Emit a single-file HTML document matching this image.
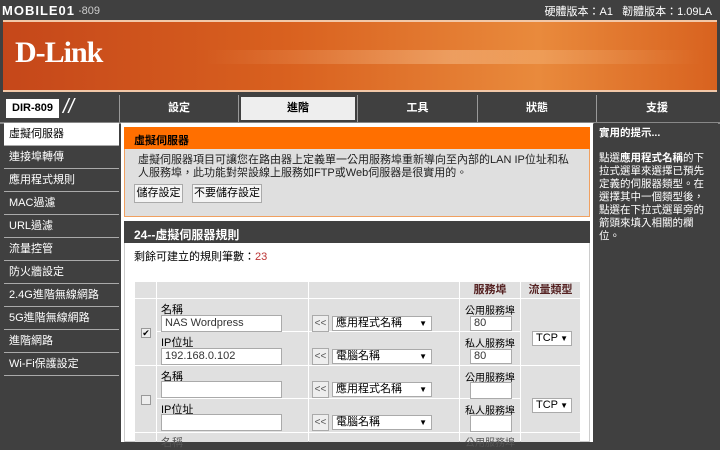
<!DOCTYPE html>
<html><head><meta charset="utf-8"><style>
*{margin:0;padding:0;box-sizing:border-box}
body{width:720px;height:442px;overflow:hidden;background:#404040;font-family:"Liberation Sans","Noto Sans CJK TC",sans-serif;font-size:11px;color:#000;position:relative}
.a{position:absolute}
.top{left:0;top:0;width:720px;height:19px;background:#404040;color:#fff;font-size:11px}
.banner{left:3px;top:20px;width:714px;height:72px;background:linear-gradient(90deg,#c5471a 0%,#d9611f 40%,#e98a3c 75%,#d8621f 100%);border-top:2px solid #f2c8a8;border-bottom:2px solid #f2c8a8}
.stripe{left:200px;top:28px;width:500px;height:14px;background:linear-gradient(90deg,rgba(255,255,255,0),rgba(255,220,180,.35),rgba(255,255,255,0))}
.nav{top:95px;height:27px;background:#404040;color:#fff;font-weight:bold;text-align:center;line-height:27px;font-size:11px;border-left:1px solid #999}
.menu{left:4px;width:115px;height:23px;background:#404040;color:#fff;border-bottom:1px solid #aaa;line-height:22px;padding-left:5px;font-size:11px}
.sel{position:absolute;height:15px;border:1px solid #aaa;background:#fff;font-size:11px;line-height:13px;padding-left:3px}
.btnl{position:absolute;width:17px;height:17px;border:1px solid #aaa;background:#eee;font-size:10px;line-height:15px;text-align:center;color:#555}
.lbl{position:absolute;font-size:11px}
.pl{position:absolute;font-size:10px;width:60px;text-align:center;left:460px}
.cell{position:absolute;background:#e0e0e0}
</style></head><body>
<div class="a top"><span class="a" style="left:4px;top:2px;color:#ccc">產品頁面：DIR-809</span><span class="a" style="left:2px;top:3px;font-weight:bold;font-size:13px;color:#fff;letter-spacing:1px;background:#404040;padding-right:4px">MOBILE01</span><span class="a" style="right:8px;top:3px">硬體版本：A1 &nbsp; 韌體版本：1.09LA</span></div>
<div class="a banner"><div class="a stripe"></div><span class="a" style="left:12px;top:14px;font-family:'Liberation Serif',serif;font-weight:bold;font-size:30px;color:#fff;letter-spacing:-1px">D-Link</span></div>
<div class="a" style="left:3px;top:95px;width:116px;height:27px;background:#404040"><div class="a" style="left:3px;top:4px;width:53px;height:19px;background:#fff;color:#000;font-weight:bold;font-size:11px;line-height:19px;text-align:center">DIR-809</div><span class="a" style="left:60px;top:1px;color:#fff;font-size:20px;font-style:italic">//</span></div>
<div class="a nav" style="left:119px;width:119px">設定</div>
<div class="a nav" style="left:238px;width:119px;"><div style="margin:2px;background:#eee;color:#000;line-height:23px">進階</div></div>
<div class="a nav" style="left:357px;width:120px">工具</div>
<div class="a nav" style="left:477px;width:119px">狀態</div>
<div class="a nav" style="left:596px;width:121px">支援</div>
<div class="a" style="left:0;top:122px;width:720px;height:2px;background:#888"></div>
<div class="a menu" style="top:123px;background:#fff;color:#000">虛擬伺服器</div>
<div class="a menu" style="top:146px">連接埠轉傳</div>
<div class="a menu" style="top:169px">應用程式規則</div>
<div class="a menu" style="top:192px">MAC過濾</div>
<div class="a menu" style="top:215px">URL過濾</div>
<div class="a menu" style="top:238px">流量控管</div>
<div class="a menu" style="top:261px">防火牆設定</div>
<div class="a menu" style="top:284px">2.4G進階無線網路</div>
<div class="a menu" style="top:307px">5G進階無線網路</div>
<div class="a menu" style="top:330px">進階網路</div>
<div class="a menu" style="top:353px">Wi-Fi保護設定</div>
<div class="a" style="left:121px;top:123px;width:472px;height:319px;background:#fff"></div>
<div class="a" style="left:124px;top:127px;width:466px;height:90px;background:#dfdfdf;border:1px solid #f0a060"></div>
<div class="a" style="left:124px;top:127px;width:466px;height:22px;background:#ff6f00;color:#000;font-weight:bold;padding:5px 0 0 10px">虛擬伺服器</div>
<div class="a" style="left:138px;top:154px;width:435px;line-height:13px;color:#222">虛擬伺服器項目可讓您在路由器上定義單一公用服務埠重新導向至內部的LAN IP位址和私人服務埠，此功能對架設線上服務如FTP或Web伺服器是很實用的。</div>
<div class="a" style="left:134px;top:184px;width:49px;height:19px;border:1px solid #aaa;background:#f4f4f4;text-align:center;line-height:17px">儲存設定</div>
<div class="a" style="left:192px;top:184px;width:70px;height:19px;border:1px solid #aaa;background:#f4f4f4;text-align:center;line-height:17px">不要儲存設定</div>
<div class="a" style="left:124px;top:221px;width:466px;height:22px;background:#404040;color:#fff;font-weight:bold;padding:5px 0 0 10px;font-size:12px">24--虛擬伺服器規則</div>
<div class="a" style="left:134px;top:248px">剩餘可建立的規則筆數：<span style="color:#b33">23</span></div>
<div class="a" style="left:124px;top:243px;width:466px;height:199px;border:1px solid #ccc;border-top:none"></div>
<div class="cell" style="left:135px;top:282px;width:21px;height:16px"></div>
<div class="cell" style="left:157px;top:282px;width:151px;height:16px"></div>
<div class="cell" style="left:309px;top:282px;width:150px;height:16px"></div>
<div class="cell" style="left:460px;top:282px;width:60px;height:16px;font-weight:bold;color:#522;text-align:center;line-height:16px">服務埠</div>
<div class="cell" style="left:521px;top:282px;width:59px;height:16px;font-weight:bold;color:#522;text-align:center;line-height:16px">流量類型</div>
<div class="cell" style="left:135px;top:299px;width:21px;height:66px"></div>
<div class="cell" style="left:157px;top:299px;width:151px;height:32px"></div>
<div class="cell" style="left:157px;top:332px;width:151px;height:33px"></div>
<div class="cell" style="left:309px;top:299px;width:150px;height:32px"></div>
<div class="cell" style="left:309px;top:332px;width:150px;height:33px"></div>
<div class="cell" style="left:460px;top:299px;width:60px;height:32px"></div>
<div class="cell" style="left:460px;top:332px;width:60px;height:33px"></div>
<div class="cell" style="left:521px;top:299px;width:59px;height:66px"></div>
<div class="cell" style="left:135px;top:366px;width:21px;height:66px"></div>
<div class="cell" style="left:157px;top:366px;width:151px;height:32px"></div>
<div class="cell" style="left:157px;top:399px;width:151px;height:33px"></div>
<div class="cell" style="left:309px;top:366px;width:150px;height:32px"></div>
<div class="cell" style="left:309px;top:399px;width:150px;height:33px"></div>
<div class="cell" style="left:460px;top:366px;width:60px;height:32px"></div>
<div class="cell" style="left:460px;top:399px;width:60px;height:33px"></div>
<div class="cell" style="left:521px;top:366px;width:59px;height:66px"></div>
<div class="cell" style="left:135px;top:433px;width:21px;height:9px"></div>
<div class="cell" style="left:157px;top:433px;width:151px;height:9px"></div>
<div class="cell" style="left:309px;top:433px;width:150px;height:9px"></div>
<div class="cell" style="left:460px;top:433px;width:60px;height:9px"></div>
<div class="cell" style="left:521px;top:433px;width:59px;height:9px"></div>
<div class="a" style="left:141px;top:328px;width:10px;height:10px;border:1px solid #999;background:#eee;font-size:9px;line-height:8px;text-align:center">✔</div>
<div class="a" style="left:141px;top:395px;width:10px;height:10px;border:1px solid #999;background:#eee"></div>
<span class="lbl" style="left:161px;top:301px">名稱</span>
<div class="sel" style="left:161px;top:315px;width:121px;height:17px;line-height:15px;color:#333">NAS Wordpress</div>
<span class="lbl" style="left:161px;top:334px">IP位址</span>
<div class="sel" style="left:161px;top:348px;width:121px;height:17px;line-height:15px;color:#333">192.168.0.102</div>
<span class="lbl" style="left:161px;top:368px">名稱</span>
<div class="sel" style="left:161px;top:381px;width:121px;height:17px"></div>
<span class="lbl" style="left:161px;top:401px">IP位址</span>
<div class="sel" style="left:161px;top:414px;width:121px;height:17px"></div>
<span class="lbl" style="left:161px;top:434px;color:#555">名稱</span>
<div class="btnl" style="left:312px;top:315px">&lt;&lt;</div>
<div class="sel" style="left:332px;top:316px;width:100px">應用程式名稱<span style="float:right;margin-right:4px;font-size:8px">▼</span></div>
<div class="btnl" style="left:312px;top:348px">&lt;&lt;</div>
<div class="sel" style="left:332px;top:349px;width:100px">電腦名稱<span style="float:right;margin-right:4px;font-size:8px">▼</span></div>
<div class="btnl" style="left:312px;top:381px">&lt;&lt;</div>
<div class="sel" style="left:332px;top:382px;width:100px">應用程式名稱<span style="float:right;margin-right:4px;font-size:8px">▼</span></div>
<div class="btnl" style="left:312px;top:414px">&lt;&lt;</div>
<div class="sel" style="left:332px;top:415px;width:100px">電腦名稱<span style="float:right;margin-right:4px;font-size:8px">▼</span></div>
<span class="pl" style="top:302px">公用服務埠</span>
<div class="sel" style="left:470px;top:316px;width:42px;height:15px;color:#333">80</div>
<span class="pl" style="top:335px">私人服務埠</span>
<div class="sel" style="left:470px;top:349px;width:42px;height:15px;color:#333">80</div>
<span class="pl" style="top:369px">公用服務埠</span>
<div class="sel" style="left:470px;top:382px;width:42px;height:17px"></div>
<span class="pl" style="top:402px">私人服務埠</span>
<div class="sel" style="left:470px;top:415px;width:42px;height:17px"></div>
<span class="pl" style="top:434px;color:#555">公用服務埠</span>
<div class="sel" style="left:532px;top:331px;width:40px">TCP<span style="float:right;margin-right:3px;font-size:8px">▼</span></div>
<div class="sel" style="left:532px;top:398px;width:40px">TCP<span style="float:right;margin-right:3px;font-size:8px">▼</span></div>
<div class="a" style="left:594px;top:123px;width:124px;height:319px;background:#404040;color:#fff;padding:4px 2px 4px 5px;line-height:13px;font-size:10.5px">
<div style="font-weight:bold;margin-bottom:12px">實用的提示...</div>
<div style="width:112px">點選<b>應用程式名稱</b>的下拉式選單來選擇已預先定義的伺服器類型。在選擇其中一個類型後，點選在下拉式選單旁的箭頭來填入相關的欄位。</div></div>
</body></html>
